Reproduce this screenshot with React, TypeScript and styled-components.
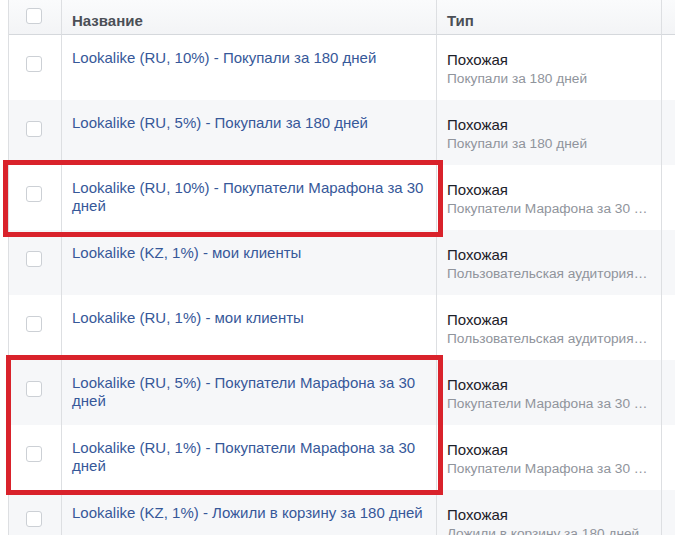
import React from "react";
import styled, { createGlobalStyle } from "styled-components";

const Global = createGlobalStyle`
  html, body { margin: 0; padding: 0; background: #ffffff; }
  body { width: 675px; height: 535px; overflow: hidden; font-family: "Liberation Sans", Arial, sans-serif; }
`;

const Page = styled.div`
  position: relative;
  width: 675px;
  height: 535px;
  overflow: hidden;
  padding-left: 8px;
  box-sizing: border-box;
`;

const Grid = styled.div`
  display: grid;
  grid-template-columns: 53px 375px 225px 1fr;
  border-left: 1px solid #dddfe2;
`;

const HeadCell = styled.div<{ $last?: boolean }>`
  height: 35px;
  box-sizing: border-box;
  background: linear-gradient(#fafbfc, #f3f4f6);
  border-bottom: 1px solid #d5d8dc;
  border-right: ${(p) => (p.$last ? "none" : "1px solid #dddfe2")};
  display: flex;
  align-items: flex-start;
  padding: 12px 0 0 10px;
  font-size: 15px;
  line-height: 18px;
  font-weight: bold;
  color: #4b4f56;
`;

const CheckCell = styled.div<{ $alt?: boolean; $head?: boolean }>`
  box-sizing: border-box;
  height: ${(p) => (p.$head ? "35px" : "65px")};
  background: ${(p) => (p.$head ? "linear-gradient(#fafbfc, #f3f4f6)" : p.$alt ? "#f6f7f9" : "#ffffff")};
  border-bottom: ${(p) => (p.$head ? "1px solid #d5d8dc" : "none")};
  border-right: 1px solid #dddfe2;
  display: flex;
  justify-content: center;
  align-items: flex-start;
  padding-top: ${(p) => (p.$head ? "8px" : "21px")};
  padding-right: 2px;
`;

const Box = styled.span`
  width: 16px;
  height: 16px;
  border: 1px solid #ccd0d5;
  border-radius: 3px;
  background: #ffffff;
  box-sizing: border-box;
`;

const Cell = styled.div<{ $alt?: boolean; $last?: boolean }>`
  box-sizing: border-box;
  height: 65px;
  background: ${(p) => (p.$alt ? "#f6f7f9" : "#ffffff")};
  border-right: ${(p) => (p.$last ? "none" : "1px solid #dddfe2")};
  padding: 14px 12px 0 10px;
  font-size: 15px;
  line-height: 18px;
  overflow: hidden;
  min-width: 0;
`;

const Link = styled.div`
  color: #365899;
`;

const TypeMain = styled.div`
  color: #1d2129;
  padding-top: 2px;
`;

const TypeSub = styled.div`
  color: #90949c;
  font-size: 13.7px;
  line-height: 20px;
  white-space: nowrap;
  overflow: hidden;
  text-overflow: ellipsis;
`;

const Mark = styled.div<{ $l: number; $t: number; $w: number; $h: number }>`
  position: absolute;
  left: ${(p) => p.$l}px;
  top: ${(p) => p.$t}px;
  width: ${(p) => p.$w}px;
  height: ${(p) => p.$h}px;
  border: 5px solid #d9222b;
  box-sizing: border-box;
  pointer-events: none;
`;

const rows = [
  { name: "Lookalike (RU, 10%) - Покупали за 180 дней", sub: "Покупали за 180 дней" },
  { name: "Lookalike (RU, 5%) - Покупали за 180 дней", sub: "Покупали за 180 дней" },
  { name: "Lookalike (RU, 10%) - Покупатели Марафона за 30 дней", sub: "Покупатели Марафона за 30 дней" },
  { name: "Lookalike (KZ, 1%) - мои клиенты", sub: "Пользовательская аудитория мои клиенты" },
  { name: "Lookalike (RU, 1%) - мои клиенты", sub: "Пользовательская аудитория мои клиенты" },
  { name: "Lookalike (RU, 5%) - Покупатели Марафона за 30 дней", sub: "Покупатели Марафона за 30 дней" },
  { name: "Lookalike (RU, 1%) - Покупатели Марафона за 30 дней", sub: "Покупатели Марафона за 30 дней" },
  { name: "Lookalike (KZ, 1%) - Ложили в корзину за 180 дней", sub: "Ложили в корзину за 180 дней" },
];

export default function App() {
  return (
    <>
      <Global />
      <Page>
        <Grid>
          <CheckCell $head>
            <Box />
          </CheckCell>
          <HeadCell>Название</HeadCell>
          <HeadCell>Тип</HeadCell>
          <HeadCell $last />
          {rows.map((r, i) => {
            const alt = i % 2 === 1;
            return (
              <React.Fragment key={i}>
                <CheckCell $alt={alt}>
                  <Box />
                </CheckCell>
                <Cell $alt={alt}>
                  <Link>{r.name}</Link>
                </Cell>
                <Cell $alt={alt}>
                  <TypeMain>Похожая</TypeMain>
                  <TypeSub>{r.sub}</TypeSub>
                </Cell>
                <Cell $alt={alt} $last />
              </React.Fragment>
            );
          })}
        </Grid>
        <Mark $l={3} $t={160} $w={440} $h={77} />
        <Mark $l={6} $t={355} $w={437} $h={140} />
      </Page>
    </>
  );
}
